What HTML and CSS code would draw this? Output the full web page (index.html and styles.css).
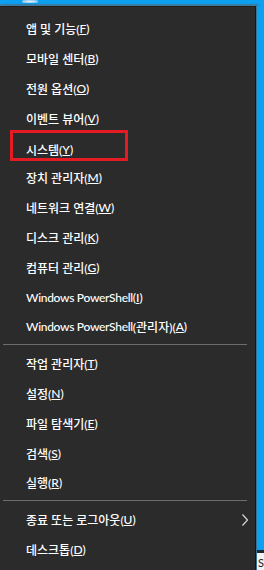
FILE: index.html
```html
<!DOCTYPE html>
<html lang="ko">
<head>
<meta charset="utf-8">
<link rel="stylesheet" href="styles.css">
</head>
<body>
<div class="desk">
  <div class="topstrip"><span class="glint"></span></div>
  <div class="row">
    <nav class="menu">
      <div class="group">
        <div class="item">앱 및 기능(<u>F</u>)</div>
        <div class="item">모바일 센터(<u>B</u>)</div>
        <div class="item">전원 옵션(<u>O</u>)</div>
        <div class="item">이벤트 뷰어(<u>V</u>)</div>
        <div class="item selected"><span class="mark">시스템(<u>Y</u>)</span></div>
        <div class="item">장치 관리자(<u>M</u>)</div>
        <div class="item">네트워크 연결(<u>W</u>)</div>
        <div class="item">디스크 관리(<u>K</u>)</div>
        <div class="item">컴퓨터 관리(<u>G</u>)</div>
        <div class="item"><span class="latin">Windows PowerShell</span>(<u>I</u>)</div>
        <div class="item"><span class="latin">Windows PowerShell</span>(관리자)(<u>A</u>)</div>
      </div>
      <div class="sep"></div>
      <div class="group">
        <div class="item">작업 관리자(<u>T</u>)</div>
        <div class="item">설정(<u>N</u>)</div>
        <div class="item">파일 탐색기(<u>E</u>)</div>
        <div class="item">검색(<u>S</u>)</div>
        <div class="item">실행(<u>R</u>)</div>
      </div>
      <div class="sep"></div>
      <div class="group">
        <div class="item sub">종료 또는 로그아웃(<u>U</u>)
          <svg class="chev" width="8" height="14" viewBox="0 0 8 14"><polyline points="1.5,1.5 6.5,7 1.5,12.5" fill="none" stroke="#d8d8d8" stroke-width="1.2"/></svg>
        </div>
        <div class="item">데스크톱(<u>D</u>)</div>
      </div>
    </nav>
    <div class="side">
      <div class="sideblue"></div>
      <div class="sidedark"></div>
      <div class="sidewhite">S</div>
    </div>
  </div>
</div>
</body>
</html>
```
FILE: styles.css
```css
html, body {
  margin: 0;
  padding: 0;
  background: #0d9ff0;
}
body {
  width: 264px;
  height: 570px;
  overflow: hidden;
  font-family: Lato, "Noto Sans CJK KR", sans-serif;
}
.desk {
  display: flex;
  flex-direction: column;
  height: 570px;
}
.topstrip {
  height: 8px;
  display: flex;
  align-items: flex-start;
}
.glint {
  margin-left: 22px;
  width: 16px;
  height: 3px;
  background: radial-gradient(ellipse at center, #e6f2fa 0%, #9cd0f0 60%, rgba(13,159,240,0) 100%);
}
.row {
  flex: 1;
  display: flex;
}
.menu {
  width: 256px;
  background: #2b2b2b;
  border-top: 1px solid #241e18;
  border-right: 1px solid #161616;
  box-shadow: 1px -1px 0 1px rgba(90,110,125,0.6), 3px 0 3px rgba(0,40,70,0.35);
  padding-top: 7px;
  display: flex;
  flex-direction: column;
}
.item {
  height: 29.8px;
  display: flex;
  align-items: center;
  padding-left: 26px;
  color: #ffffff;
  font-size: 12px;
  font-weight: 500;
  white-space: nowrap;
}
.latin {
  letter-spacing: -0.3px;
}
.item u {
  text-decoration-thickness: 1px;
  text-underline-offset: 1px;
}
.selected {
  padding-left: 10px;
  align-items: flex-start;
}
.mark {
  box-sizing: border-box;
  display: flex;
  align-items: center;
  width: 118px;
  height: 31px;
  margin-top: -3px;
  padding: 7px 0 0 13px;
  border: 3px solid #e41b23;
}
.sub {
  position: relative;
}
.chev {
  position: absolute;
  left: 241px;
  top: 8px;
}
.sep {
  height: 1px;
  background: #6d6d6d;
  margin: 2px 8px 4px 3px;
}
.side {
  flex: 1;
  display: flex;
  flex-direction: column;
  margin-left: 1px;
}
.sideblue {
  height: 544px;
  background: #0d9ff0;
}
.sidedark {
  height: 3px;
  background: #1d2a34;
}
.sidewhite {
  flex: 1;
  background: #f2f2f2;
  color: #222;
  font-size: 11px;
  line-height: 14px;
  padding-left: 1px;
  padding-top: 3px;
  overflow: hidden;
}
```
